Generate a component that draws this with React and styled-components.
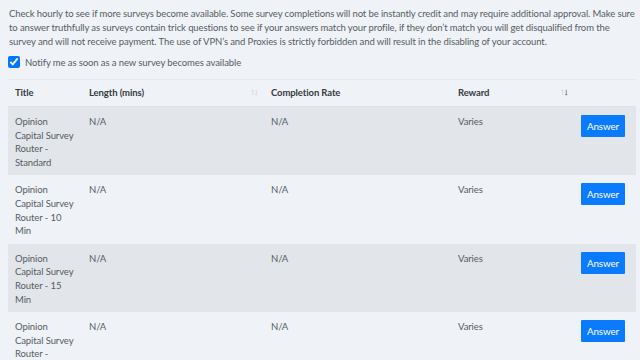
import React, { useState } from 'react'
import styled, { createGlobalStyle } from 'styled-components'

const surveys = [
  { id: 1, title: 'Opinion Capital Survey Router - Standard' },
  { id: 2, title: 'Opinion Capital Survey Router - 10 Min' },
  { id: 3, title: 'Opinion Capital Survey Router - 15 Min' },
  { id: 4, title: 'Opinion Capital Survey Router - Extended' },
]

// up/down arrows, $active darkens the down arrow (current sort)
function SortIcon({ active }) {
  return (
    <SortGlyph viewBox="0 0 8 8" aria-hidden="true">
      <path d="M2 1v6M0.8 2.2L2 1l1.2 1.2" stroke="#d2d6da" strokeWidth="0.9" fill="none" />
      <path d="M6 1v6M4.8 5.8L6 7l1.2-1.2" stroke={active ? '#6c737a' : '#d2d6da'} strokeWidth="0.9" fill="none" />
    </SortGlyph>
  )
}

function App() {
  const [notify, setNotify] = useState(true)

  return (
    <>
      <GlobalStyle />
      <Page>
        <Notice>
          Check hourly to see if more surveys become available. Some survey completions will not be instantly
          credit and may require additional approval. Make sure to answer truthfully as surveys contain trick
          questions to see if your answers match your profile, if they don’t match you will get disqualified
          from the survey and will not receive payment. The use of VPN’s and Proxies is strictly forbidden and
          will result in the disabling of your account.
        </Notice>

        <NotifyLabel>
          <input type="checkbox" checked={notify} onChange={() => setNotify(!notify)} />
          Notify me as soon as a new survey becomes available
        </NotifyLabel>

        <Table>
          <thead>
            <tr>
              <Th $w="74px">Title</Th>
              <Th $w="182px">Length (mins)<SortIcon /></Th>
              <Th $w="187px">Completion Rate</Th>
              <Th $w="123px">Reward<SortIcon active /></Th>
              <Th />
            </tr>
          </thead>
          <tbody>
            {surveys.map((s, i) => (
              <Row key={s.id} $striped={i % 2 === 0}>
                <Td>{s.title}</Td>
                <Td>N/A</Td>
                <Td>N/A</Td>
                <Td>Varies</Td>
                <Td>
                  <AnswerButton>Answer</AnswerButton>
                </Td>
              </Row>
            ))}
          </tbody>
        </Table>
      </Page>
    </>
  )
}

const GlobalStyle = createGlobalStyle`
  html, body {
    margin: 0;
    background: #eff3f7;
  }
  body {
    font-family: Lato, "Noto Sans", sans-serif;
    font-size: 9.5px;
    letter-spacing: -0.1px;
    color: #555c63;
    overflow: hidden;
  }
`

const Page = styled.div`
  padding: 7px 4px 0 8px;
`

const Notice = styled.p`
  margin: 0 0 7px 1px;
  line-height: 14px;
`

const NotifyLabel = styled.label`
  display: flex;
  align-items: center;
  gap: 5px;
  margin-left: 0;

  input {
    width: 12px;
    height: 12px;
    margin: 0;
    accent-color: #0075ff;
  }
`

const Table = styled.table`
  width: 628px;
  margin-top: 11px;
  border-collapse: collapse;
  table-layout: fixed;
  font-size: 9.5px;
`

const Th = styled.th`
  box-sizing: border-box;
  width: ${({ $w }) => $w || 'auto'};
  position: relative;
  text-align: left;
  font-weight: 700;
  color: #343a40;
  padding: 7px 7px 7px 7px;
  border-top: 1px solid #e6eaee;
  border-bottom: 1px solid #dee2e6;
  line-height: 12px;
`

const SortGlyph = styled.svg`
  position: absolute;
  right: 6px;
  top: 9px;
  width: 7px;
  height: 7px;
`

const Row = styled.tr`
  background: ${({ $striped }) => ($striped ? '#e2e6ea' : 'transparent')};
`

const Td = styled.td`
  box-sizing: border-box;
  vertical-align: top;
  padding: 8px 7px 6px 7px;
  line-height: 13.6px;
`

const AnswerButton = styled.button`
  display: block;
  font-family: inherit;
  font-size: 9.8px;
  letter-spacing: -0.1px;
  color: #fff;
  background: #0a7bff;
  border: none;
  border-radius: 1px;
  width: 44px;
  height: 22px;
  padding: 0;
  cursor: pointer;
`

export default App
